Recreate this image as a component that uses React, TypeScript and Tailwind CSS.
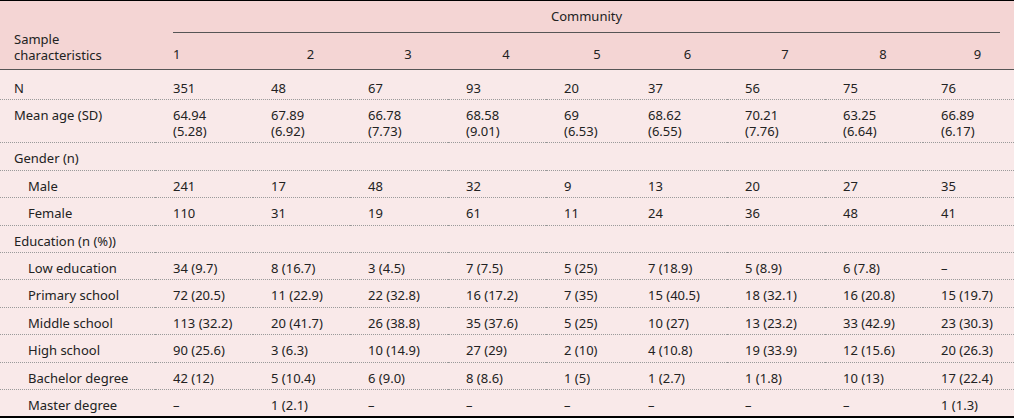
const communities = ["1", "2", "3", "4", "5", "6", "7", "8", "9"];

const colWidths = [
  "w-[155px]",
  "w-[98px]",
  "w-[97px]",
  "w-[98px]",
  "w-[98px]",
  "w-[84px]",
  "w-[97px]",
  "w-[98px]",
  "w-[98px]",
  "w-[91px]",
];

type Row = {
  label: string;
  sub?: boolean;
  first?: boolean;
  last?: boolean;
  values: string[];
};

const rows: Row[] = [
  {
    label: "N",
    first: true,
    values: ["351", "48", "67", "93", "20", "37", "56", "75", "76"],
  },
  {
    label: "Mean age (SD)",
    values: [
      "64.94\n(5.28)",
      "67.89\n(6.92)",
      "66.78\n(7.73)",
      "68.58\n(9.01)",
      "69\n(6.53)",
      "68.62\n(6.55)",
      "70.21\n(7.76)",
      "63.25\n(6.64)",
      "66.89\n(6.17)",
    ],
  },
  { label: "Gender (n)", values: [] },
  {
    label: "Male",
    sub: true,
    values: ["241", "17", "48", "32", "9", "13", "20", "27", "35"],
  },
  {
    label: "Female",
    sub: true,
    values: ["110", "31", "19", "61", "11", "24", "36", "48", "41"],
  },
  { label: "Education (n (%))", values: [] },
  {
    label: "Low education",
    sub: true,
    values: ["34 (9.7)", "8 (16.7)", "3 (4.5)", "7 (7.5)", "5 (25)", "7 (18.9)", "5 (8.9)", "6 (7.8)", "–"],
  },
  {
    label: "Primary school",
    sub: true,
    values: ["72 (20.5)", "11 (22.9)", "22 (32.8)", "16 (17.2)", "7 (35)", "15 (40.5)", "18 (32.1)", "16 (20.8)", "15 (19.7)"],
  },
  {
    label: "Middle school",
    sub: true,
    values: ["113 (32.2)", "20 (41.7)", "26 (38.8)", "35 (37.6)", "5 (25)", "10 (27)", "13 (23.2)", "33 (42.9)", "23 (30.3)"],
  },
  {
    label: "High school",
    sub: true,
    values: ["90 (25.6)", "3 (6.3)", "10 (14.9)", "27 (29)", "2 (10)", "4 (10.8)", "19 (33.9)", "12 (15.6)", "20 (26.3)"],
  },
  {
    label: "Bachelor degree",
    sub: true,
    values: ["42 (12)", "5 (10.4)", "6 (9.0)", "8 (8.6)", "1 (5)", "1 (2.7)", "1 (1.8)", "10 (13)", "17 (22.4)"],
  },
  {
    label: "Master degree",
    sub: true,
    last: true,
    values: ["–", "1 (2.1)", "–", "–", "–", "–", "–", "–", "1 (1.3)"],
  },
];

const App = () => {
  return (
    <div className="w-[1014px] h-[418px] bg-[#f9e9e9] font-['Noto_Sans',sans-serif] text-[13px] text-[#222]">
      <table className="w-[1014px] table-fixed border-collapse border-t border-b-2 border-black">
        <colgroup>
          {colWidths.map((w, i) => (
            <col key={i} className={w} />
          ))}
        </colgroup>
        <thead className="bg-[#f4d5d4]">
          <tr>
            <th
              rowSpan={2}
              className="pl-[14px] pb-[6px] align-bottom text-left font-normal leading-[16px] border-b border-[#555]"
            >
              Sample
              <br />
              characteristics
            </th>
            <th colSpan={9} className="p-0 font-normal">
              <div className="ml-[18px] mr-[14px] pt-[7px] pb-[7px] leading-[17px] text-center border-b border-[#555]">
                Community
              </div>
            </th>
          </tr>
          <tr>
            {communities.map((c, i) => (
              <th
                key={c}
                className={`pt-[13px] pb-[6px] leading-[17px] font-normal align-bottom border-b border-[#555] ${
                  i === 0 ? "pl-[18px] text-left" : "pl-[18px] text-center"
                }`}
              >
                {c}
              </th>
            ))}
          </tr>
        </thead>
        <tbody>
          {rows.map((row) => {
            const pad = row.first ? "pt-[10px] pb-[3px]" : "pt-[7px] pb-[3px]";
            const lead = row.values[1]?.includes("\n") ? "leading-[16px]" : "leading-[16.4px]";
            return (
              <tr
                key={row.label}
                className={row.last ? "" : "border-b border-dotted border-[#9a9a9a]"}
              >
                <td
                  className={`${pad} ${lead} align-top ${row.sub ? "pl-[28px]" : "pl-[14px]"}`}
                >
                  {row.label}
                </td>
                {communities.map((c, i) => (
                  <td
                    key={c}
                    className={`${pad} ${lead} pl-[18px] align-top whitespace-pre-line`}
                  >
                    {row.values[i] ?? ""}
                  </td>
                ))}
              </tr>
            );
          })}
        </tbody>
      </table>
    </div>
  );
};

export default App;
